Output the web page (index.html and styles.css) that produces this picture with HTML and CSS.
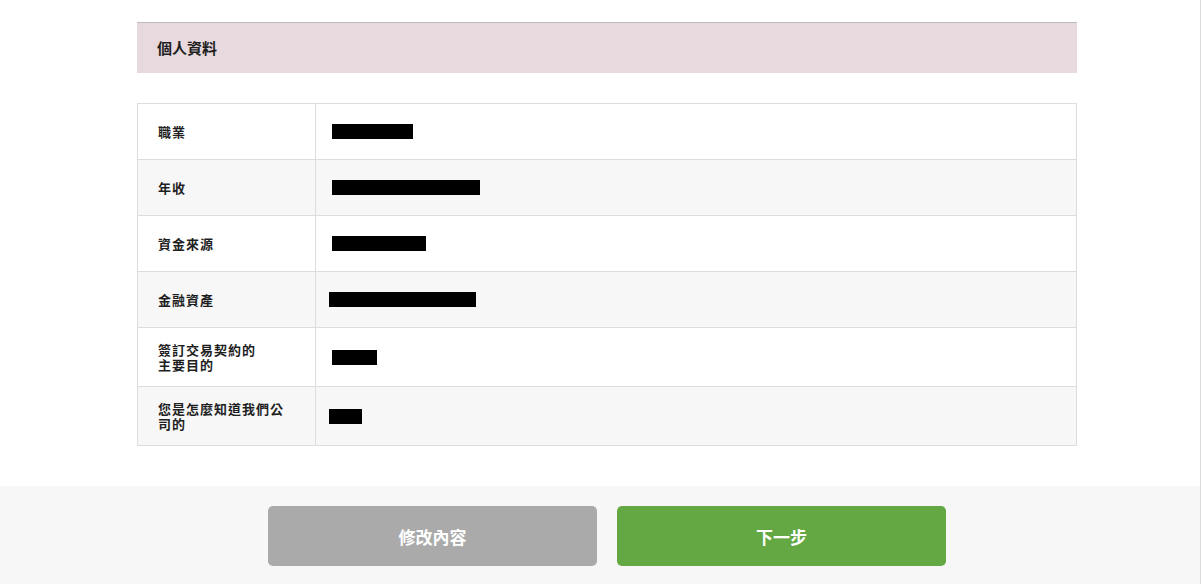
FILE: index.html
```html
<!DOCTYPE html>
<html lang="zh-Hant">
<head>
  <meta charset="UTF-8" />
  <meta name="viewport" content="width=device-width, initial-scale=1.0"/>
  <title>確認內容</title>
  <link rel="stylesheet" href="styles.css">
</head>
<body>

<div class="page">
  <div class="content">
    <h2 class="section-title">個人資料</h2>

    <table class="info-table">
      <tr>
        <th>職業</th>
        <td><span class="redact" style="width:81px"></span></td>
      </tr>
      <tr class="alt">
        <th>年收</th>
        <td><span class="redact" style="width:148px"></span></td>
      </tr>
      <tr>
        <th>資金來源</th>
        <td><span class="redact" style="width:94px"></span></td>
      </tr>
      <tr class="alt">
        <th>金融資產</th>
        <td><span class="redact shift" style="width:147px"></span></td>
      </tr>
      <tr>
        <th>簽訂交易契約的<br>主要目的</th>
        <td><span class="redact" style="width:45px"></span></td>
      </tr>
      <tr class="alt">
        <th>您是怎麼知道我們公司的</th>
        <td><span class="redact shift" style="width:33px"></span></td>
      </tr>
    </table>
  </div>

  <div class="footer">
    <div class="buttons">
      <button class="btn btn-back">修改內容</button>
      <button class="btn btn-next">下一步</button>
    </div>
  </div>
</div>

</body>
</html>
```

FILE: styles.css
```css
html, body {
  margin: 0;
  padding: 0;
}

body {
  font-family: "Noto Sans CJK TC", "Noto Sans", sans-serif;
  background: #fff;
  color: #1e1e1e;
}

.page {
  width: 1200px;
  min-height: 584px;
  border-right: 1px solid #dcdcdc;
}

.content {
  width: 940px;
  margin-left: 137px;
  padding: 22px 0 40px;
}

.section-title {
  margin: 0;
  height: 50px;
  line-height: 50px;
  padding: 0 20px;
  border-top: 1px solid #bdbdbd;
  background: #e7d9dd;
  font-size: 15px;
  font-weight: bold;
}

.info-table {
  width: 100%;
  margin-top: 30px;
  border-collapse: collapse;
}

.info-table th,
.info-table td {
  border: 1px solid #dddddd;
  vertical-align: middle;
}

.info-table th {
  width: 127px;
  padding: 14px 30px 14px 20px;
  text-align: left;
  font-size: 13px;
  letter-spacing: 1px;
  line-height: 15px;
  font-weight: bold;
}

.info-table td {
  padding: 20px 16px;
}

.info-table tr.alt {
  background: #f7f7f7;
}

.redact {
  display: block;
  height: 15px;
  background: #000;
}

.redact.shift {
  margin-left: -3px;
}

.footer {
  background: #f7f7f7;
  padding: 20px 0 20px;
}

.buttons {
  display: flex;
  justify-content: center;
  gap: 20px;
  width: 940px;
  margin-left: 137px;
}

.btn {
  width: 329px;
  height: 60px;
  border: none;
  border-radius: 5px;
  color: #fff;
  font-family: "Noto Sans CJK TC", "Noto Sans", sans-serif;
  font-size: 17px;
  font-weight: bold;
  cursor: pointer;
}

.btn-back {
  background: #aaaaaa;
}

.btn-next {
  background: #63a843;
}
```
